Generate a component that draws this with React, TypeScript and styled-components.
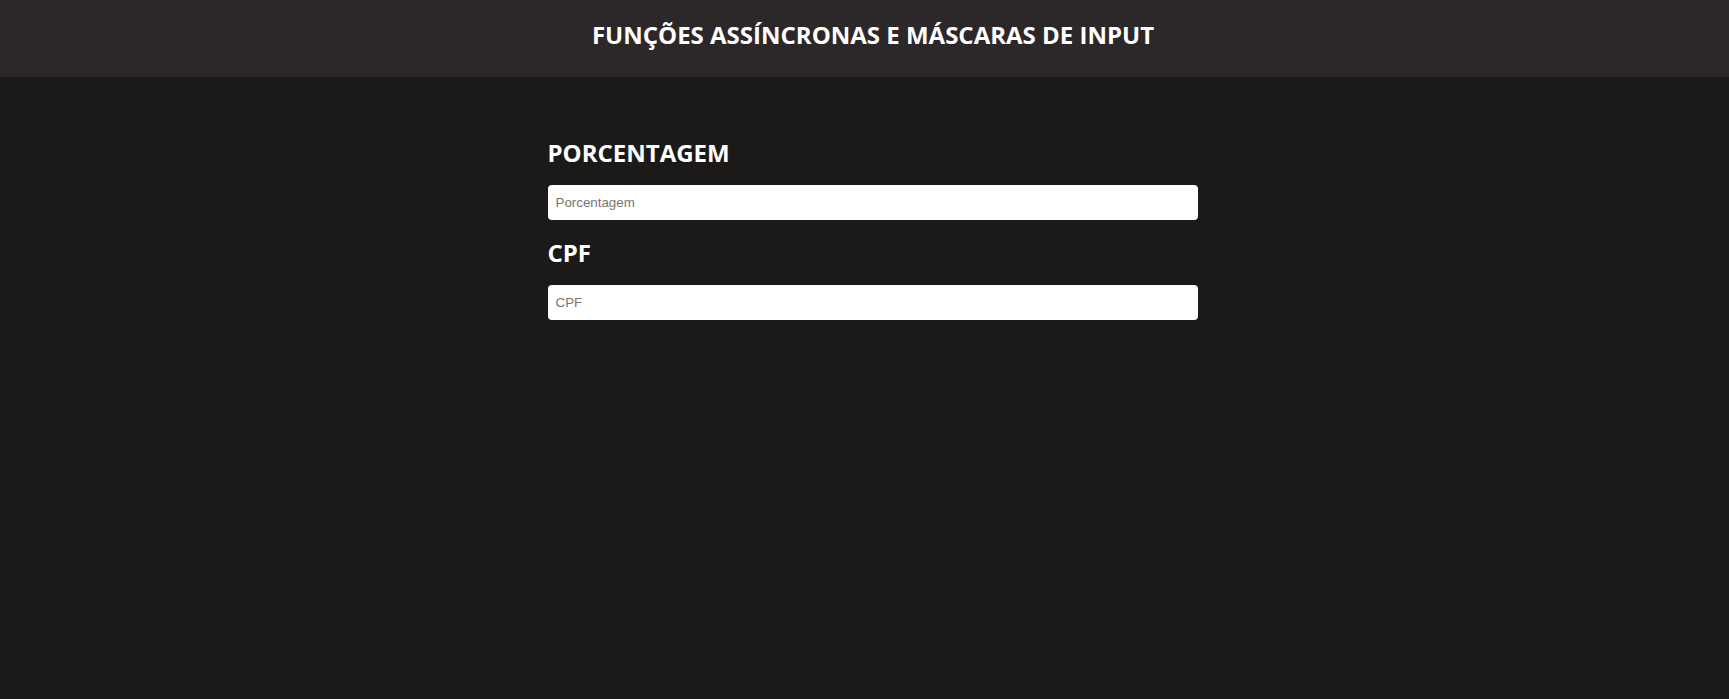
import React from "react";
import styled, { createGlobalStyle } from "styled-components";

const Global = createGlobalStyle`
  html, body {
    margin: 0;
    padding: 0;
    background: #1c1a19;
    min-height: 100%;
  }
  body {
    font-family: "Open Sans", "Liberation Sans", Arial, sans-serif;
    color: #ffffff;
    min-height: 699px;
  }
  * { box-sizing: border-box; }
`;

const Header = styled.header`
  height: 77px;
  background: #2c2829;
  display: flex;
  justify-content: center;
  padding: 18px 0 0 17px;
`;

const Title = styled.h1`
  margin: 0;
  font-family: "Open Sans", "Liberation Sans", Arial, sans-serif;
  font-weight: 700;
  font-size: 24px;
  line-height: normal;
  color: #ffffff;
  text-transform: uppercase;
`;

const Main = styled.main`
  width: 666px;
  margin: 0 auto;
  padding: 59px 0 0 16px;
  display: flex;
  flex-direction: column;
`;

const Label = styled.h2`
  margin: 0 0 16px;
  font-family: "Open Sans", "Liberation Sans", Arial, sans-serif;
  font-weight: 700;
  font-size: 24px;
  line-height: normal;
  color: #ffffff;
`;

const Input = styled.input`
  width: 650px;
  height: 35px;
  margin: 0 0 16px;
  padding: 0 8px;
  border: none;
  border-radius: 4px;
  background: #ffffff;
  font-family: "Liberation Sans", Arial, sans-serif;
  font-size: 13.33px;
  color: #222;
  outline: none;
  &::placeholder {
    color: #757575;
  }
`;

export default function App() {
  return (
    <>
      <Global />
      <Header>
        <Title>Funções Assíncronas e Máscaras de Input</Title>
      </Header>
      <Main>
        <Label>PORCENTAGEM</Label>
        <Input type="text" placeholder="Porcentagem" />
        <Label>CPF</Label>
        <Input type="text" placeholder="CPF" />
      </Main>
    </>
  );
}
